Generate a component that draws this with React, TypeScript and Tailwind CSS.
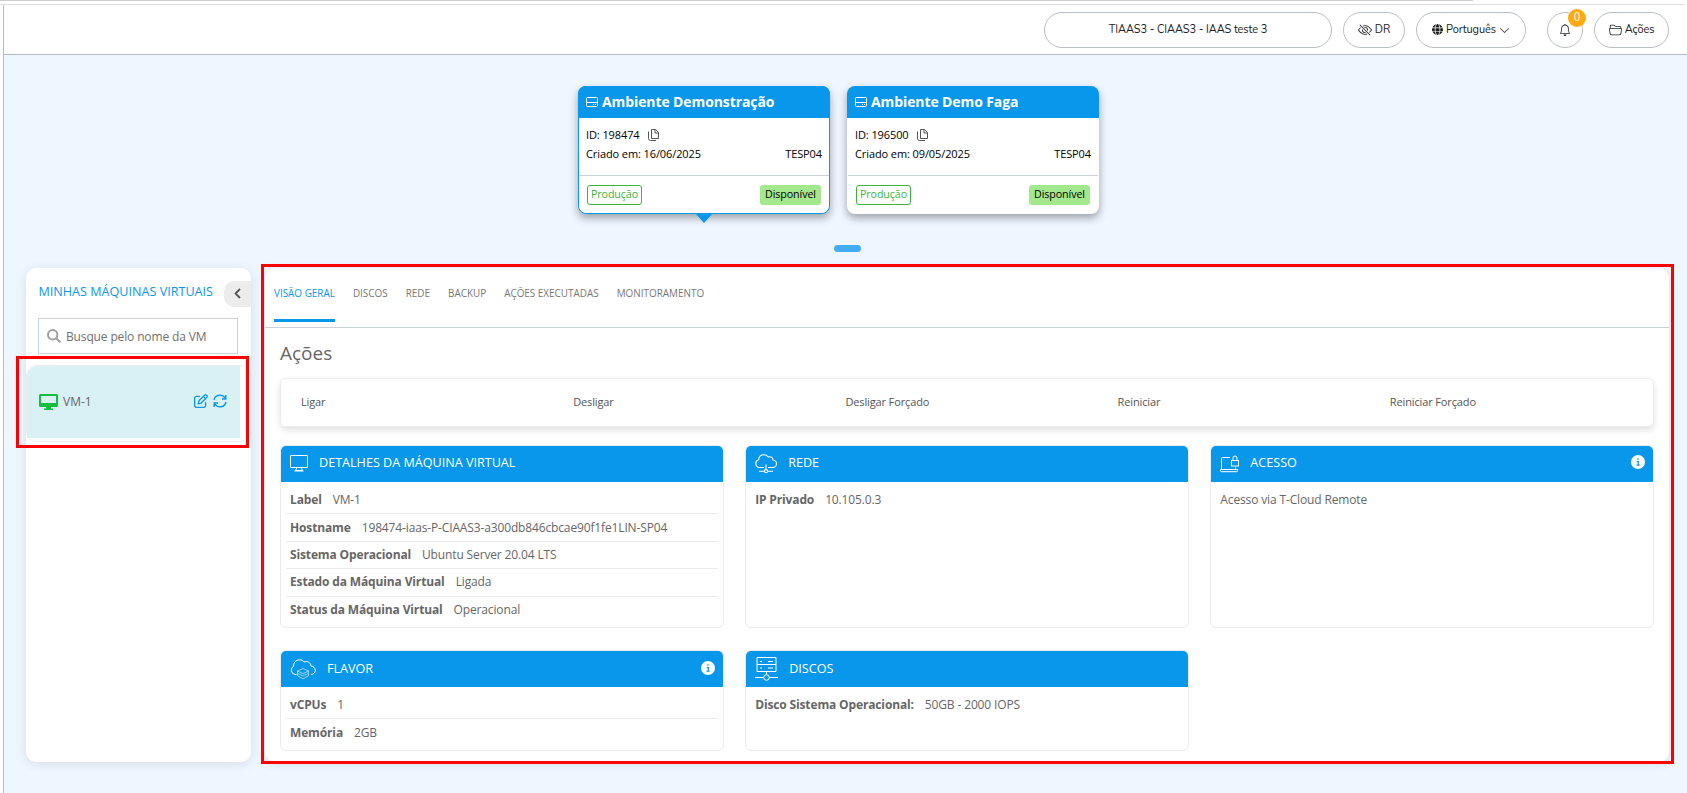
import type { ReactNode } from 'react'
import { BsBell, BsChevronDown, BsEyeSlash, BsFolder2Open } from 'react-icons/bs'
import { FaGlobe, FaRegPenToSquare } from 'react-icons/fa6'

const environments = [
  { name: 'Ambiente Demonstração', id: '198474', created: '16/06/2025', site: 'TESP04', active: true },
  { name: 'Ambiente Demo Faga', id: '196500', created: '09/05/2025', site: 'TESP04', active: false },
]

const tabs = ['VISÃO GERAL', 'DISCOS', 'REDE', 'BACKUP', 'AÇÕES EXECUTADAS', 'MONITORAMENTO']

const actions = ['Ligar', 'Desligar', 'Desligar Forçado', 'Reiniciar', 'Reiniciar Forçado']

const icons: Record<string, ReactNode> = {
  monitor: (
    <svg className="mb-0.5" width="18" height="18" viewBox="0 0 18 18" fill="none" stroke="currentColor" strokeWidth="1">
      <rect x="0.5" y="1.5" width="17" height="12" rx="0.5" />
      <path d="M7 13.5 5.5 16.5h7L11 13.5M4.5 17h9" />
    </svg>
  ),
  network: (
    <svg width="22" height="20" viewBox="0 0 22 20" fill="none" stroke="currentColor" strokeWidth="1.1">
      <path d="M9 13.5H4.5A4 4 0 0 1 3.6 5.7 C4 2.8 6.3 0.8 9 0.8 c2 0 3.4 1 4.2 2.2 C15.8 2 18 3.8 18 6 c2 .3 3.5 1.8 3.5 3.8 a3.7 3.7 0 0 1-3.7 3.7H13M11 10.5v5M4 17.2h5M13 17.2h5" />
      <circle cx="11" cy="17.2" r="1.6" />
    </svg>
  ),
  access: (
    <svg width="19" height="18" viewBox="0 0 19 18" fill="none" stroke="currentColor" strokeWidth="1">
      <path d="M10 2.5H2.5a1 1 0 0 0-1 1V14M15.5 12.5v1.5M.5 14.5h17v1.2a1 1 0 0 1-1 1h-15a1 1 0 0 1-1-1z" />
      <rect x="11.5" y="5.5" width="7" height="5.5" />
      <path d="M13 5.500V3a2 2 0 0 1 4 0v2.500" />
    </svg>
  ),
  flavor: (
    <svg width="26" height="21" viewBox="0 0 26 21" fill="none" stroke="currentColor" strokeWidth="1">
      <path d="M6.500 15.500H5A4.500 4.500 0 0 1 3.500 7.200 C3.500 3.500 6 .8 9.500 .8c2 0 3.500.8 4.500 2.200 3.500-1.500 6.500.5 7 4 2.500.3 4.300 2 4.300 4.400 0 2.300-1.600 4-4.300 4.100" />
      <path d="m7.500 12 5.500-2.500 5.500 2.500-5.500 2.700zM7.500 12v2.300l5.500 2.700 5.500-2.700V12M7.500 14.500v2.300l5.500 3 5.500-3v-2.300" strokeWidth="0.6" />
    </svg>
  ),
  disks: (
    <svg width="23" height="24" viewBox="0 0 23 24" fill="none" stroke="currentColor" strokeWidth="1">
      <path d="M2 .5h19v14H2zM2 7.500h19M5 4.500h2M13 4.500h5M5 11h2M13 11h5M11.500 14.500v3M0 20.500h8.500M14.500 20.500H23" />
      <circle cx="11.500" cy="20.500" r="2.800" />
    </svg>
  ),
}

const cards = [
  {
    title: 'DETALHES DA MÁQUINA VIRTUAL',
    icon: 'monitor',
    rows: [
      ['Label', 'VM-1'],
      ['Hostname', '198474-iaas-P-CIAAS3-a300db846cbcae90f1fe1LIN-SP04'],
      ['Sistema Operacional', 'Ubuntu Server 20.04 LTS'],
      ['Estado da Máquina Virtual', 'Ligada'],
      ['Status da Máquina Virtual', 'Operacional'],
    ],
  },
  { title: 'REDE', icon: 'network', rows: [['IP Privado', '10.105.0.3']] },
  { title: 'ACESSO', icon: 'access', info: true, rows: [['', 'Acesso via T-Cloud Remote']] },
  { title: 'FLAVOR', icon: 'flavor', info: true, low: true, rows: [['vCPUs', '1'], ['Memória', '2GB']] },
  { title: 'DISCOS', icon: 'disks', low: true, rows: [['Disco Sistema Operacional:', '50GB - 2000 IOPS']] },
]

function EnvironmentCard({ env }: { env: (typeof environments)[number] }) {
  return (
    <div
      className={`relative flex h-32 w-[252px] flex-col rounded-lg border bg-white text-[11px] tracking-[-0.1px] text-black shadow-[0_4px_8px_rgba(0,0,0,0.35)] ${
        env.active ? 'border-[#0997eb]' : 'border-transparent'
      }`}
    >
      <div className="-mx-px -mt-px flex h-8 shrink-0 items-center gap-1 rounded-t-lg bg-[#0997eb] pl-2 text-white">
        <svg width="12" height="11" viewBox="0 0 12 11" fill="none" stroke="currentColor">
          <rect x="0.5" y="0.5" width="11" height="9" rx="1" />
          <path d="M.5 5.500h11M7 7.500h1M9 7.500h1" />
        </svg>
        <span className="text-sm font-bold">{env.name}</span>
      </div>
      <div className="flex h-[57px] flex-col px-[7px] pt-[7px] leading-[19px]">
        <div className="flex items-center gap-2">
          ID: {env.id}
          <svg width="11" height="12" viewBox="0 0 11 12" fill="none" stroke="#555">
            <path d="M3.500.5h4l3 3v6h-7zM7 .5V4h3.500M.5 2.500v7a2 2 0 0 0 2 2H8" />
          </svg>
        </div>
        <div className="flex justify-between">
          <span>Criado em: {env.created}</span>
          <span>{env.site}</span>
        </div>
      </div>
      <div className="flex flex-1 items-start justify-between border-t border-[#ccd1da] px-2 pt-[9px] text-[10.700px]">
        <span className="flex h-5 w-[55px] items-center justify-center rounded-[3px] border border-[#3cb43c] pb-px text-[#3cb43c]">Produção</span>
        <span className="flex h-5 w-[61px] items-center justify-center rounded-[3px] bg-[#a3e88c] pb-px">Disponível</span>
      </div>
      {env.active && (
        <svg className="absolute top-[126px] left-[116px]" width="18" height="10" viewBox="0 0 18 10">
          <path d="M0 0h18L9 10z" fill="#0997eb" />
        </svg>
      )}
    </div>
  )
}

function DetailCard({ card }: { card: (typeof cards)[number] }) {
  return (
    <div className="flex flex-col overflow-hidden rounded-md border border-[#ececec] bg-white">
      <div className="flex h-9 shrink-0 items-center bg-[#0997eb] pr-2 pl-[9px] text-[12.600px] text-white">
        {icons[card.icon]}
        <span className={`ml-[11px] ${card.low ? 'pt-px' : 'pb-px'}`}>{card.title}</span>
        {card.info && (
          <svg className={`ml-auto ${card.low ? 'mb-0.5' : 'mb-1'}`} width="14" height="14" viewBox="0 0 14 14">
            <circle cx="7" cy="7" r="7" fill="#fff" />
            <path d="M6 4h2M5.700 6.600h1.600V10M5.500 10.200h3.200" stroke="#0997eb" strokeWidth="1.200" fill="none" />
          </svg>
        )}
      </div>
      <div className="px-[5px] pt-1">
        {card.rows.map(([label, value], i) => (
          <div
            key={label}
            className={`flex h-[27.400px] items-center gap-[11px] px-1 text-xs tracking-[-0.14px] text-[#666] ${i > 0 ? 'border-t border-[#ececec]' : ''}`}
          >
            {label && <b>{label}</b>}
            <span>{value}</span>
          </div>
        ))}
      </div>
    </div>
  )
}

export default function App() {
  return (
    <div className="flex h-[793px] w-[1687px] flex-col overflow-hidden bg-white font-['Open_Sans',sans-serif]">
      <div className="h-1 shrink-0">
        <div className="h-px w-[1473px] bg-[#cfcfcf]" />
      </div>
      <div className="h-px w-[1685px] shrink-0 bg-[#dedede]" />

      <div className="ml-[3px] flex min-h-0 flex-1 flex-col border-l border-[#b9bdc2] bg-[#eef6ff]">
        <header className="flex h-[50px] shrink-0 items-start justify-end border-b border-[#b4b9c0] bg-white pt-[7px] pr-[18px] font-['Nunito','Open_Sans',sans-serif] text-[11px] tracking-[-0.1px] text-[#222]">
          <div className="flex h-9 w-72 items-center justify-center rounded-full border border-[#b9bec5]">TIAAS3 - CIAAS3 - IAAS teste 3</div>
          <button className="ml-[11px] flex h-9 w-[62px] items-center justify-center gap-[3px] rounded-full border border-[#b9bec5]">
            <BsEyeSlash size={14} /> DR
          </button>
          <button className="ml-[11px] flex h-9 w-[110px] items-center justify-center gap-[3px] rounded-full border border-[#b9bec5]">
            <FaGlobe size={11} className="mb-px" /> Português <BsChevronDown size={11} />
          </button>
          <button className="relative ml-[21px] flex size-9 items-center justify-center rounded-full border border-[#b9bec5]">
            <BsBell size={12} className="mb-px" />
            <span className="absolute -top-1 left-5 flex size-[18px] items-center justify-center rounded-full bg-[#ffab10] text-[11px] text-white">0</span>
          </button>
          <button className="ml-[11px] flex h-9 w-[75px] items-center justify-center gap-[3px] rounded-full border border-[#b9bec5]">
            <BsFolder2Open size={13} className="mb-px" /> Ações
          </button>
        </header>

        <section className="flex h-[213px] shrink-0 flex-col items-center pt-[31px] pr-[14px]">
          <div className="flex gap-[17px]">
            {environments.map((env) => (
              <EnvironmentCard key={env.id} env={env} />
            ))}
          </div>
          <div className="mt-[31px] ml-[18px] h-[7px] w-[27px] rounded-full bg-[#42adf0]" />
        </section>

        <div className="flex pl-[22px]">
          <aside className="relative h-[494px] w-[225px] rounded-[10px] bg-white shadow-[0_2px_12px_rgba(0,0,0,0.1)]">
            <div className="flex items-start pt-[13px] pl-[12.500px]">
              <h2 className="flex-1 pt-0.5 text-[12.600px] whitespace-nowrap text-[#0997eb]">MINHAS MÁQUINAS VIRTUAIS</h2>
              <button className="flex h-[26px] w-[27px] items-center justify-center rounded-l-[10px] bg-[#ececec] pb-0.5">
                <svg width="7" height="11" viewBox="0 0 7 11" fill="none" stroke="#555" strokeWidth="1.800">
                  <path d="M6 1 1.500 5.500 6 10" />
                </svg>
              </button>
            </div>
            <div className="mt-[11px] ml-3 flex h-9 w-[200px] items-center gap-[5px] border border-[#ccd0d8] pl-2 text-xs tracking-[-0.14px] text-[#707070]">
              <svg width="14" height="14" viewBox="0 0 14 14" fill="none" stroke="#a0a0a0" strokeWidth="2">
                <circle cx="5.700" cy="5.700" r="4.700" />
                <path d="m9.200 9.200 4.200 4.200" />
              </svg>
              <span className="pt-0.5">Busque pelo nome da VM</span>
            </div>
            <div className="mt-[11px] h-[77px] rounded-[10px] border border-[#ececec]">
              <div className="flex h-[72px] w-[213px] items-center rounded-tl-[10px] bg-[#d9f0f4] pr-[13px] pl-3 text-xs text-[#666]">
                <svg width="19" height="16" viewBox="0 0 19 16" fill="#12be3f">
                  <path fillRule="evenodd" d="M1.500 0h16A1.500 1.500 0 0 1 19 1.500v10a1.500 1.500 0 0 1-1.500 1.500H12v1.500h2V16H5v-1.500h2V13H1.500A1.500 1.500 0 0 1 0 11.500v-10A1.500 1.500 0 0 1 1.500 0zM2 2v7h15V2z" />
                </svg>
                <span className="ml-[5px] flex-1">VM-1</span>
                <FaRegPenToSquare size={14} className="mb-0.5 text-[#0997eb]" />
                <svg className="mb-0.5 ml-[5px]" width="14" height="14" viewBox="0 0 14 14" fill="none" stroke="#0997eb" strokeWidth="1.400">
                  <path d="M1 6A6 6 0 0 1 12 4M13 8A6 6 0 0 1 2 10M12.800 1v4H9M1.200 13V9H5" />
                </svg>
              </div>
            </div>
            <div className="absolute top-[88px] -left-2.5 h-[92px] w-[233px] border-3 border-[#ff0000]" />
          </aside>

          <main className="relative ml-3.5 flex h-[494px] w-[1404px] flex-col rounded-[10px] bg-white shadow-[0_2px_12px_rgba(0,0,0,0.1)]">
            <nav className="flex h-[60px] shrink-0 gap-[18px] border-b border-[#ccd0d8] pl-[9px] text-[9.920px] text-[#777]">
              {tabs.map((tab, i) => (
                <a
                  key={tab}
                  className={`flex h-[54px] items-center border-b-3 ${i === 0 ? 'border-[#0997eb] text-[#0997eb]' : 'border-transparent'}`}
                >
                  {tab}
                </a>
              ))}
            </nav>
            <div className="px-[15px] pt-[11px]">
              <h1 className="h-[39px] text-[19px] text-[#666]">Ações</h1>
              <div className="h-[49px] rounded-md border border-[#ececec] pl-5 text-[11px] tracking-[-0.13px] text-[#555] shadow-[0_3px_6px_rgba(0,0,0,0.12)]">
                <div className="grid h-[46px] w-[1361px] grid-cols-5 items-center">
                  {actions.map((action) => (
                    <span key={action}>{action}</span>
                  ))}
                </div>
              </div>
              <div className="mt-[18px] grid grid-cols-3 grid-rows-[183px_101px] gap-x-[21.500px] gap-y-[22px]">
                {cards.map((card) => (
                  <DetailCard key={card.title} card={card} />
                ))}
              </div>
            </div>
            <div className="absolute -top-1 -left-1 h-[500px] w-[1413px] border-3 border-[#ff0000]" />
          </main>
        </div>
      </div>
    </div>
  )
}
